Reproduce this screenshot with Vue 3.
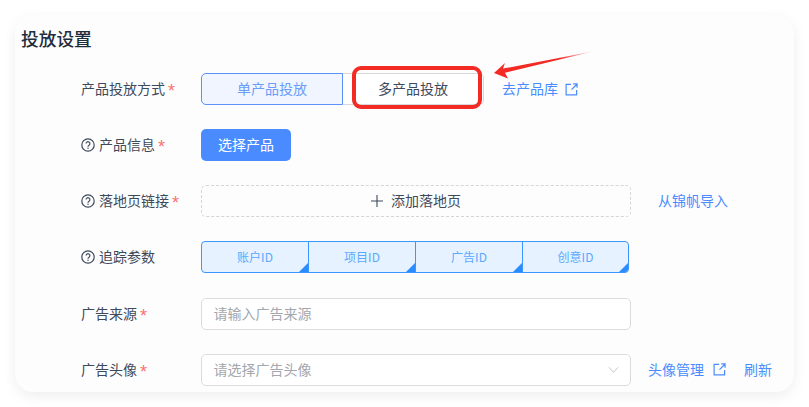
<script setup>
const ids = ['账户ID', '项目ID', '广告ID', '创意ID']
</script>

<template>
  <div class="page">
    <section class="card">
      <h2 class="title">投放设置</h2>
      <div class="form">
        <div class="row">
          <div class="label">产品投放方式<i>*</i></div>
          <div class="radio-group">
            <div class="radio active">单产品投放</div>
            <div class="radio plain">多产品投放</div>
          </div>
          <a class="link lib">去产品库
            <svg class="ext" viewBox="0 0 14 14"><path d="M6.5 1.5H1.2v11.3h11.3V7.6M7 7.2l5.6-5.6M8.8 1h4.2v4.2" /></svg>
          </a>
        </div>
        <div class="row">
          <div class="label">
            <svg class="help" viewBox="0 0 14 14"><circle cx="7" cy="7" r="6.2" /><path d="M5.1 5.6a1.9 1.9 0 1 1 2.9 1.6c-.7.4-1 .8-1 1.5" /><circle class="dot" cx="7" cy="10.3" r=".7" /></svg>
            产品信息<i>*</i>
          </div>
          <button class="primary">选择产品</button>
        </div>
        <div class="row">
          <div class="label">
            <svg class="help" viewBox="0 0 14 14"><circle cx="7" cy="7" r="6.2" /><path d="M5.1 5.6a1.9 1.9 0 1 1 2.9 1.6c-.7.4-1 .8-1 1.5" /><circle class="dot" cx="7" cy="10.3" r=".7" /></svg>
            落地页链接<i>*</i>
          </div>
          <div class="dashed">
            <svg class="plus" viewBox="0 0 12 12"><path d="M6 0v12M0 6h12" /></svg>
            添加落地页
          </div>
          <a class="link import">从锦帆导入</a>
        </div>
        <div class="row">
          <div class="label">
            <svg class="help" viewBox="0 0 14 14"><circle cx="7" cy="7" r="6.2" /><path d="M5.1 5.6a1.9 1.9 0 1 1 2.9 1.6c-.7.4-1 .8-1 1.5" /><circle class="dot" cx="7" cy="10.3" r=".7" /></svg>
            追踪参数
          </div>
          <div class="tags">
            <div v-for="id in ids" :key="id" class="tag">{{ id }}<span class="corner"></span></div>
          </div>
        </div>
        <div class="row">
          <div class="label">广告来源<i>*</i></div>
          <div class="field">请输入广告来源</div>
        </div>
        <div class="row">
          <div class="label">广告头像<i>*</i></div>
          <div class="field">
            请选择广告头像
            <svg class="chev" viewBox="0 0 12 8"><path d="M1 1l5 5.6L11 1" /></svg>
          </div>
          <a class="link avatar">头像管理
            <svg class="ext" viewBox="0 0 14 14"><path d="M6.5 1.5H1.2v11.3h11.3V7.6M7 7.2l5.6-5.6M8.8 1h4.2v4.2" /></svg>
          </a>
          <a class="link refresh">刷新</a>
        </div>
      </div>
      <div class="highlight"></div>
      <svg class="arrow" viewBox="0 0 110 34">
        <defs>
          <linearGradient id="fade" x1="0" y1="0" x2="1" y2="0">
            <stop offset="0" stop-color="#f22b24" />
            <stop offset="0.65" stop-color="#f22b24" />
            <stop offset="1" stop-color="#f22b24" stop-opacity="0.05" />
          </linearGradient>
        </defs>
        <path fill="url(#fade)" d="M5 23 L16 13 L14 18.6 L106 1 L16 22.8 L19 28.5 Z" />
      </svg>
    </section>
  </div>
</template>

<style scoped>
.page {
  width: 809px;
  height: 407px;
  padding: 15px;
  box-sizing: border-box;
  background: #fff;
  font-family: "Noto Sans CJK SC", "Noto Sans", sans-serif;
  overflow: hidden;
}
.card {
  position: relative;
  width: 779px;
  height: 377px;
  background: #fdfdfd;
  border-radius: 18px;
  box-shadow: 0 4px 14px rgba(0, 0, 0, 0.07);
  overflow: hidden;
}
.title {
  margin: 0;
  padding: 10px 0 0 6px;
  height: 47px;
  box-sizing: border-box;
  font-size: 17.7px;
  line-height: 26px;
  font-weight: 500;
  color: #1f2d3d;
}
.form {
  display: flex;
  flex-direction: column;
  gap: 24.15px;
  padding: 11px 0 0 66px;
}
.row {
  display: flex;
  align-items: center;
  height: 32px;
  font-size: 14px;
  color: #3d4a5c;
}
.label {
  width: 120px;
  height: 32px;
  padding-bottom: 2px;
  box-sizing: border-box;
  flex: none;
  display: flex;
  align-items: center;
  white-space: nowrap;
}
.label i {
  margin: 6px 0 0 3px;
  color: #f77474;
  font: normal 18px/14px "Liberation Sans", sans-serif;
}
.help {
  width: 14px;
  height: 14px;
  margin: 2px 4px 0 0;
  fill: none;
  stroke: #3d4a5c;
  stroke-width: 1.2;
}
.help .dot {
  fill: #3d4a5c;
  stroke: none;
}
.radio-group {
  display: flex;
  width: 283px;
  flex: none;
}
.radio {
  flex: 1;
  height: 32px;
  padding-bottom: 2px;
  box-sizing: border-box;
  display: flex;
  align-items: center;
  justify-content: center;
}
.radio.active {
  background: #f0f5ff;
  border: 1px solid #5b92f8;
  border-radius: 5px 0 0 5px;
  color: #6a9cf8;
}
.radio.plain {
  background: #fff;
  border: 1px solid #d8d8d8;
  border-left: 0;
  border-radius: 0 5px 5px 0;
  color: #3d4a5c;
}
.link {
  height: 32px;
  padding-bottom: 2px;
  box-sizing: border-box;
  display: flex;
  align-items: center;
  color: #4a8cff;
  white-space: nowrap;
}
.lib {
  margin-left: 18px;
}
.import {
  margin-left: 27px;
}
.avatar {
  margin-left: 17px;
}
.refresh {
  margin-left: 18px;
}
.ext {
  width: 13px;
  height: 13px;
  margin: 2px 0 0 7px;
  fill: none;
  stroke: #4a8cff;
  stroke-width: 1.3;
}
.avatar .ext {
  margin-left: 9px;
}
.primary {
  width: 90px;
  height: 32px;
  padding: 0 0 2px;
  border: 0;
  border-radius: 5px;
  background: #4a8cff;
  color: #fff;
  font: inherit;
}
.dashed {
  width: 430px;
  height: 32px;
  padding-bottom: 2px;
  flex: none;
  box-sizing: border-box;
  border: 1px dashed #d5d5d5;
  border-radius: 5px;
  display: flex;
  align-items: center;
  justify-content: center;
  gap: 8px;
  color: #3d4a5c;
}
.plus {
  width: 12px;
  height: 12px;
  margin-top: 2px;
  fill: none;
  stroke: #3d4a5c;
  stroke-width: 1.1;
}
.tags {
  display: grid;
  grid-template-columns: 106px 107px 107px 1fr;
  width: 428px;
  height: 32px;
  box-sizing: border-box;
  border: 1px solid #3b96ff;
  border-radius: 4px;
  background: #e6f2ff;
  overflow: hidden;
}
.tag {
  position: relative;
  padding-bottom: 2px;
  box-sizing: border-box;
  display: flex;
  align-items: center;
  justify-content: center;
  font-size: 12px;
  color: #5aa9ff;
}
.tag + .tag {
  border-left: 1px solid #3b96ff;
}
.corner {
  position: absolute;
  right: 0;
  bottom: 0;
  width: 0;
  height: 0;
  border-style: solid;
  border-width: 0 0 9px 9px;
  border-color: transparent transparent #2b8cff transparent;
}
.field {
  position: relative;
  width: 430px;
  height: 32px;
  padding: 0 0 2px 11.5px;
  flex: none;
  box-sizing: border-box;
  border: 1px solid #dcdcdc;
  border-radius: 5px;
  background: #fff;
  display: flex;
  align-items: center;
  color: #a3a7ae;
}
.chev {
  position: absolute;
  right: 11px;
  top: 11px;
  width: 11px;
  height: 8px;
  fill: none;
  stroke: #bdbfc4;
  stroke-width: 1;
}
.highlight {
  position: absolute;
  left: 337px;
  top: 51px;
  width: 130px;
  height: 43px;
  box-sizing: border-box;
  border: 4px solid #f22b24;
  border-radius: 9px;
}
.arrow {
  position: absolute;
  left: 474px;
  top: 35px;
  width: 110px;
  height: 34px;
}
</style>
